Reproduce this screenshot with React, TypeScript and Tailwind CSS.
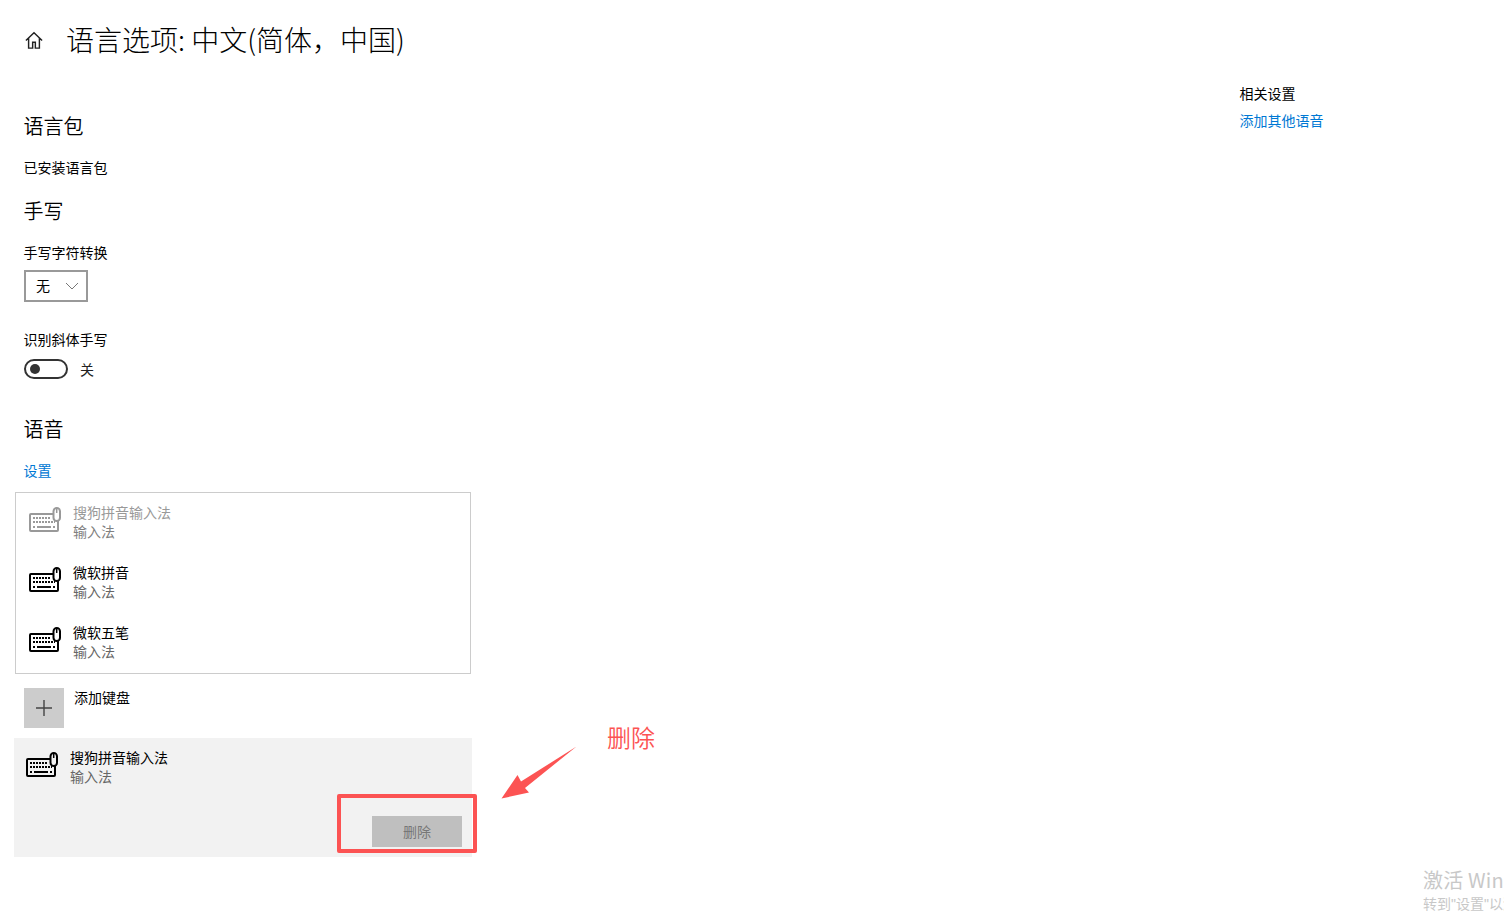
import React from "react";

function KeyboardIcon({ className = "" }: { className?: string }) {
  return (
    <svg width="32" height="25" viewBox="0 0 32 25" className={className} fill="none" stroke="currentColor" strokeWidth="2">
      <path d="M24 7H2a1 1 0 0 0-1 1v15a1 1 0 0 0 1 1h26a1 1 0 0 0 1-1V14" />
      <rect x="24.5" y="1" width="6.5" height="13" rx="3.25" />
      <path d="M27.7 2v4" strokeWidth="1.5" />
      <path d="M4 11h18M4 15h22" strokeWidth="2" strokeDasharray="2 1" />
      <path d="M8 20h14" strokeWidth="2" />
      <path d="M4 20h2M24 20h2" strokeWidth="2" />
    </svg>
  );
}

function ImeRow({ name, faded }: { name: string; faded?: boolean }) {
  return (
    <div className="flex h-[60px] items-start pl-[13px]">
      <KeyboardIcon className={faded ? "mt-[14px] text-[#999999]" : "mt-[14px] text-black"} />
      <div className="ml-[12px] mt-[9px] flex flex-col">
        <span className={`text-[14px] leading-[20px] ${faded ? "text-[#999999]" : "text-black"}`}>{name}</span>
        <span className={`text-[14px] leading-[19px] ${faded ? "text-[#808080]" : "text-[#666666]"}`}>输入法</span>
      </div>
    </div>
  );
}

export default function App() {
  return (
    <div
      className="relative flex h-[923px] w-[1504px] overflow-hidden bg-white text-black"
      style={{ fontFamily: '"Noto Sans CJK SC", "Noto Sans", sans-serif' }}
    >
      <main className="flex w-[1240px] flex-col pl-[24px] pt-[20px]">
        <header className="flex h-[40px] items-center">
          <svg width="18" height="18" viewBox="0 0 20 20" fill="none" stroke="#222222" strokeWidth="1.6" className="ml-px">
            <path d="M1 10.500 10 2l9 8.500M4 8v11h4.500v-6.500h3V19H16V8" />
          </svg>
          <h1 className="-mt-[2px] ml-[23px] whitespace-nowrap text-[28px] font-light leading-[40px] text-black">语言选项: 中文(简体，中国)</h1>
        </header>

        <h2 className="-ml-[0.5px] mt-[52px] text-[20px] font-[350] leading-[28px]">语言包</h2>
        <p className="-ml-[0.5px] mt-[17px] text-[14px] leading-[20px]">已安装语言包</p>

        <h2 className="-ml-[0.5px] mt-[20px] text-[20px] font-[350] leading-[28px]">手写</h2>
        <p className="-ml-[0.5px] mt-[17px] text-[14px] leading-[20px]">手写字符转换</p>
        <div className="mt-[8px] flex h-[32px] w-[64px] items-center border-2 border-[#999999] pb-[2px] pl-[10px] text-[14px]">
          <span>无</span>
          <svg width="14" height="8" viewBox="0 0 14 8" fill="none" stroke="#777777" className="ml-[15px] mt-[2px]">
            <path d="M1 1l6 6 6-6" />
          </svg>
        </div>

        <p className="-ml-[0.5px] mt-[27px] text-[14px] leading-[20px]">识别斜体手写</p>
        <div className="mt-[10px] flex h-[20px] items-center">
          <div className="flex h-[20px] w-[44px] items-center rounded-full border-2 border-[#333333] pl-[4px]">
            <div className="h-[10px] w-[10px] rounded-full bg-[#333333]" />
          </div>
          <span className="ml-[12px] text-[14px] text-[#222222]">关</span>
        </div>

        <h2 className="-ml-[0.5px] mt-[36px] text-[20px] font-[350] leading-[28px]">语音</h2>
        <a className="-ml-[0.5px] mt-[17px] text-[14px] leading-[20px] text-[#0078d4]">设置</a>

        <div className="-ml-[9px] mt-[12px] h-[182px] w-[456px] border border-[#cccccc]">
          <ImeRow name="搜狗拼音输入法" faded />
          <ImeRow name="微软拼音" />
          <ImeRow name="微软五笔" />
        </div>

        <div className="mt-[14px] flex items-start">
          <div className="flex h-[40px] w-[40px] items-center justify-center bg-[#cccccc]">
            <svg width="16" height="16" viewBox="0 0 16 16" stroke="#444444" strokeWidth="1.4">
              <path d="M8 0v16M0 8h16" />
            </svg>
          </div>
          <span className="-mt-px ml-[10px] text-[14px] leading-[20px]">添加键盘</span>
        </div>

        <section className="-ml-[10px] mt-[10px] flex h-[119px] w-[458px] flex-col bg-[#f2f2f2]">
          <div className="flex pl-[12px] pt-[9px]">
            <KeyboardIcon className="mt-[5px] text-black" />
            <div className="ml-[12px] flex flex-col">
              <span className="text-[14px] leading-[20px]">搜狗拼音输入法</span>
              <span className="text-[14px] leading-[19px] text-[#666666]">输入法</span>
            </div>
          </div>
          <div className="flex justify-end pr-[10px] pt-[30px]">
            <button className="h-[31px] w-[90px] bg-[#bfbfbf] text-[14px] text-[#777777]">删除</button>
          </div>
        </section>
      </main>

      <aside className="-ml-[0.5px] flex flex-col pt-[83px]">
        <p className="text-[14px] leading-[20px]">相关设置</p>
        <a className="mt-[7px] text-[14px] leading-[20px] text-[#0078d4]">添加其他语音</a>
      </aside>

      <div className="absolute left-[337px] top-[794px] h-[59px] w-[140px] rounded-[2px] border-[4px] border-[#fc5353]" />
      <svg className="absolute left-[500px] top-[745px]" width="80" height="56" viewBox="0 0 80 56">
        <path d="M76.500 1.500 25 43l4 4.500L1.500 53.500 17.500 30l3.500 6.500z" fill="#fc5353" />
      </svg>
      <span className="absolute left-[607px] top-[719px] text-[24px] font-[350] leading-[36px] text-[#fc5353]">删除</span>

      <div className="absolute left-[1423px] top-[866px] flex w-[81px] flex-col overflow-hidden whitespace-nowrap text-[#c8c8c8]">
        <span className="text-[20px] leading-[28px] tracking-[0.2px]">激活 Windows</span>
        <span className="text-[14px] leading-[18px]">
          转到<span className="font-['Liberation_Sans']">"</span>设置<span className="font-['Liberation_Sans']">"</span>以激活 Windows。
        </span>
      </div>
    </div>
  );
}
